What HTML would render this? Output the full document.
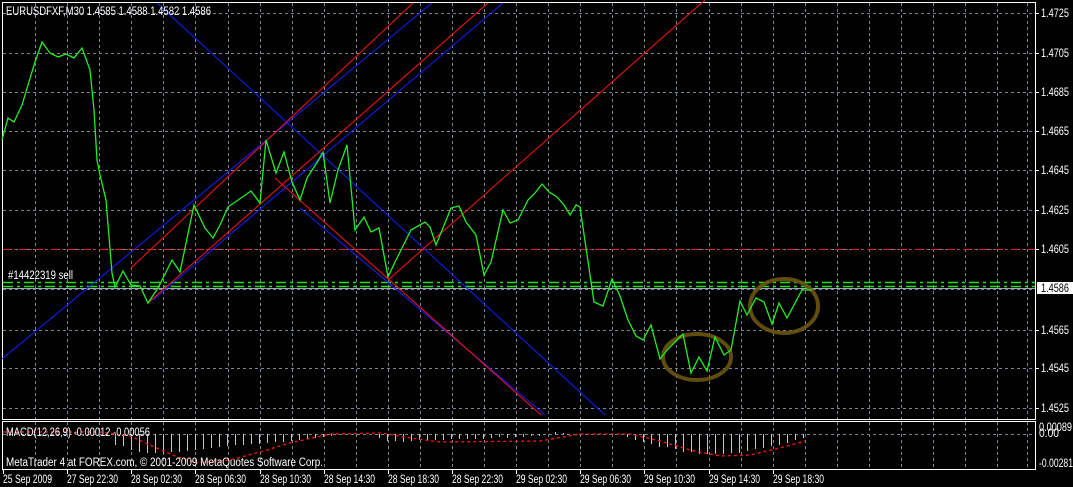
<!DOCTYPE html>
<html><head><meta charset="utf-8"><style>
html,body{margin:0;padding:0;background:#000;width:1073px;height:487px;overflow:hidden}
svg{display:block}
text{font-family:"Liberation Sans",sans-serif;font-size:11.5px;fill:#fff}
</style></head><body>
<svg width="1073" height="487" xmlns="http://www.w3.org/2000/svg">
<rect width="1073" height="487" fill="#000"/>
<g stroke="#7a8594" stroke-dasharray="3,3" stroke-width="1">
<path d="M35.5 3V419M67.5 3V419M99.5 3V419M131.5 3V419M163.5 3V419M195.5 3V419M228.5 3V419M260.5 3V419M292.5 3V419M324.5 3V419M356.5 3V419M388.5 3V419M420.5 3V419M452.5 3V419M484.5 3V419M516.5 3V419M548.5 3V419M580.5 3V419M612.5 3V419M644.5 3V419M676.5 3V419M709.5 3V419M741.5 3V419M773.5 3V419M805.5 3V419M837.5 3V419M869.5 3V419M901.5 3V419M933.5 3V419M965.5 3V419M997.5 3V419M1027.5 3V419"/>
<path d="M35.5 422V469M67.5 422V469M99.5 422V469M131.5 422V469M163.5 422V469M195.5 422V469M228.5 422V469M260.5 422V469M292.5 422V469M324.5 422V469M356.5 422V469M388.5 422V469M420.5 422V469M452.5 422V469M484.5 422V469M516.5 422V469M548.5 422V469M580.5 422V469M612.5 422V469M644.5 422V469M676.5 422V469M709.5 422V469M741.5 422V469M773.5 422V469M805.5 422V469M837.5 422V469M869.5 422V469M901.5 422V469M933.5 422V469M965.5 422V469M997.5 422V469M1027.5 422V469"/>
<path d="M3 13.5H1035M3 53.5H1035M3 92.5H1035M3 131.5H1035M3 170.5H1035M3 210.5H1035M3 249.5H1035M3 289.5H1035M3 330.5H1035M3 368.5H1035M3 408.5H1035M3 434.5H1035"/>
</g>
<rect x="2.5" y="2.5" width="1033" height="417" fill="none" stroke="#fff"/>
<rect x="2.5" y="421.5" width="1033" height="48" fill="none" stroke="#fff"/>
<g stroke="#fff"><path d="M1035 13.5h4M1035 53.5h4M1035 92.5h4M1035 131.5h4M1035 170.5h4M1035 210.5h4M1035 249.5h4M1035 330.5h4M1035 368.5h4M1035 408.5h4M3.5 470v4M67.5 470v4M131.5 470v4M195.5 470v4M260.5 470v4M324.5 470v4M388.5 470v4M452.5 470v4M516.5 470v4M580.5 470v4M644.5 470v4M709.5 470v4M773.5 470v4"/></g>
<path d="M3 249.5H1035" stroke="#e02020" stroke-dasharray="8,3,2,3"/>
<path d="M3 282.5H1035M3 286.5H1035" stroke="#22dd22" stroke-width="1.5" stroke-dasharray="10,4,3,4"/>
<path d="M3 288.5H1035" stroke="#a0a8b8"/>
<g fill="none" stroke-width="1">
<path d="M157 3L605 415" stroke="#1020ff"/>
<path d="M300 208L545 415" stroke="#1020ff"/>
<path d="M275 178L541 415" stroke="#ff1010"/>
<path d="M2 359L432 3" stroke="#1020ff"/>
<path d="M131 268L413 3" stroke="#ff1010"/>
<path d="M148 303L488 3" stroke="#ff1010"/>
<path d="M153 300L503 3" stroke="#1020ff"/>
<path d="M388 280L705 0" stroke="#ff1010"/>
</g>
<g fill="none" stroke="#6b5510" stroke-width="4" opacity="0.9">
<ellipse cx="697" cy="357" rx="34" ry="23"/>
<ellipse cx="784" cy="306" rx="34" ry="27"/>
</g>
<polyline fill="none" stroke="#22ee22" stroke-width="1.3" points="2,140 8,118 14,122 22,105 28,85 35,62 42,42 50,53 58,57 66,54 74,58 82,48 90,70 94,110 97,160 100,175 106,200 112,273 115,287 123,271 131,285 140,286 148,303 158,288 172,260 180,272 194,205 205,228 213,238 220,225 228,207 251,191 260,203 266,140 276,173 284,152 292,182 300,200 307,178 318,161 323,152 330,203 338,170 347,145 355,230 364,217 371,232 379,228 388,277 395,262 404,244 411,230 425,222 430,227 436,245 451,208 459,206 466,222 476,235 484,275 491,262 503,210 510,223 518,220 528,200 535,193 542,184 549,192 557,197 564,205 570,215 576,205 580,207 594,302 603,306 612,279 620,296 628,320 636,336 643,340 651,325 660,359 668,349 683,334 691,373 699,357 707,371 715,337 724,355 731,350 740,301 747,315 756,298 764,302 772,324 779,303 787,318 802,290 812,290"/>
<path stroke="#c8c8c8" fill="none" d="M115.5 434V445M123.5 434V446M131.5 434V450M139.5 434V452M147.5 434V453M155.5 434V453M163.5 434V453M171.5 434V452M179.5 434V452M187.5 434V451M195.5 434V450M203.5 434V449M211.5 434V448M219.5 434V447M227.5 434V446M235.5 434V445M243.5 434V445M251.5 434V444M259.5 434V444M267.5 434V443M275.5 434V442M283.5 434V442M291.5 434V441M299.5 434V440M307.5 434V439M315.5 434V438M323.5 434V437M331.5 434V436M379.5 434V438M387.5 434V441M395.5 434V441M403.5 434V442M411.5 434V441M419.5 434V440M427.5 434V440M435.5 434V440M443.5 434V440M451.5 434V439M459.5 434V439M467.5 434V439M475.5 434V439M483.5 434V439M491.5 434V438M499.5 434V437M507.5 434V438M515.5 434V437M523.5 434V437M531.5 434V436M539.5 434V436M555.5 434V432M563.5 434V433M627.5 434V437M635.5 434V440M643.5 434V442M651.5 434V444M659.5 434V447M667.5 434V447M675.5 434V449M683.5 434V452M691.5 434V452M699.5 434V454M707.5 434V454M715.5 434V454M723.5 434V454M731.5 434V453M739.5 434V453M747.5 434V451M755.5 434V449M763.5 434V448M771.5 434V446M779.5 434V445M787.5 434V443M795.5 434V440M803.5 434V438"/>
<polyline fill="none" stroke="#ff1010" stroke-width="1.3" stroke-dasharray="3,3" points="3,432 100,432 130,436 150,445 175,456 197,463 230,460 260,452 290,443 330,434 382,433 410,438 440,442 540,441 580,434 630,434 660,441 690,450 720,456 750,455 780,448 805,441"/>
<text x="6" y="15" textLength="205" lengthAdjust="spacingAndGlyphs">EURUSDFXF,M30  1.4585 1.4588 1.4582 1.4586</text>
<text x="8" y="279" textLength="65" lengthAdjust="spacingAndGlyphs">#14422319 sell</text>
<text x="6" y="436" textLength="144" lengthAdjust="spacingAndGlyphs">MACD(12,26,9) -0.00012 -0.00056</text>
<text x="6" y="466" textLength="317" lengthAdjust="spacingAndGlyphs">MetaTrader 4 at FOREX.com, © 2001-2009 MetaQuotes Software Corp.</text>
<g>
<text x="1041" y="17" textLength="28" lengthAdjust="spacingAndGlyphs">1.4725</text><text x="1041" y="57" textLength="28" lengthAdjust="spacingAndGlyphs">1.4705</text><text x="1041" y="96" textLength="28" lengthAdjust="spacingAndGlyphs">1.4685</text><text x="1041" y="135" textLength="28" lengthAdjust="spacingAndGlyphs">1.4665</text><text x="1041" y="174" textLength="28" lengthAdjust="spacingAndGlyphs">1.4645</text><text x="1041" y="214" textLength="28" lengthAdjust="spacingAndGlyphs">1.4625</text><text x="1041" y="253" textLength="28" lengthAdjust="spacingAndGlyphs">1.4605</text>
<rect x="1037" y="282" width="36" height="12" fill="#fff"/>
<text x="1041" y="292" style="fill:#000" textLength="28" lengthAdjust="spacingAndGlyphs">1.4586</text>
<text x="1041" y="334" textLength="28" lengthAdjust="spacingAndGlyphs">1.4565</text><text x="1041" y="372" textLength="28" lengthAdjust="spacingAndGlyphs">1.4545</text><text x="1041" y="412" textLength="28" lengthAdjust="spacingAndGlyphs">1.4525</text>
<text x="1039" y="431" textLength="33" lengthAdjust="spacingAndGlyphs">0.00089</text><text x="1039" y="437" textLength="20" lengthAdjust="spacingAndGlyphs">0.00</text><text x="1039" y="467" textLength="34" lengthAdjust="spacingAndGlyphs">-0.00281</text>
</g>
<g>
<text x="3" y="483" textLength="49" lengthAdjust="spacingAndGlyphs">25 Sep 2009</text>
<text x="67" y="483" textLength="51" lengthAdjust="spacingAndGlyphs">27 Sep 22:30</text>
<text x="131" y="483" textLength="51" lengthAdjust="spacingAndGlyphs">28 Sep 02:30</text>
<text x="195" y="483" textLength="51" lengthAdjust="spacingAndGlyphs">28 Sep 06:30</text>
<text x="260" y="483" textLength="51" lengthAdjust="spacingAndGlyphs">28 Sep 10:30</text>
<text x="324" y="483" textLength="51" lengthAdjust="spacingAndGlyphs">28 Sep 14:30</text>
<text x="388" y="483" textLength="51" lengthAdjust="spacingAndGlyphs">28 Sep 18:30</text>
<text x="452" y="483" textLength="51" lengthAdjust="spacingAndGlyphs">28 Sep 22:30</text>
<text x="516" y="483" textLength="51" lengthAdjust="spacingAndGlyphs">29 Sep 02:30</text>
<text x="580" y="483" textLength="51" lengthAdjust="spacingAndGlyphs">29 Sep 06:30</text>
<text x="644" y="483" textLength="51" lengthAdjust="spacingAndGlyphs">29 Sep 10:30</text>
<text x="709" y="483" textLength="51" lengthAdjust="spacingAndGlyphs">29 Sep 14:30</text>
<text x="773" y="483" textLength="51" lengthAdjust="spacingAndGlyphs">29 Sep 18:30</text>
</g>
</svg>
</body></html>
